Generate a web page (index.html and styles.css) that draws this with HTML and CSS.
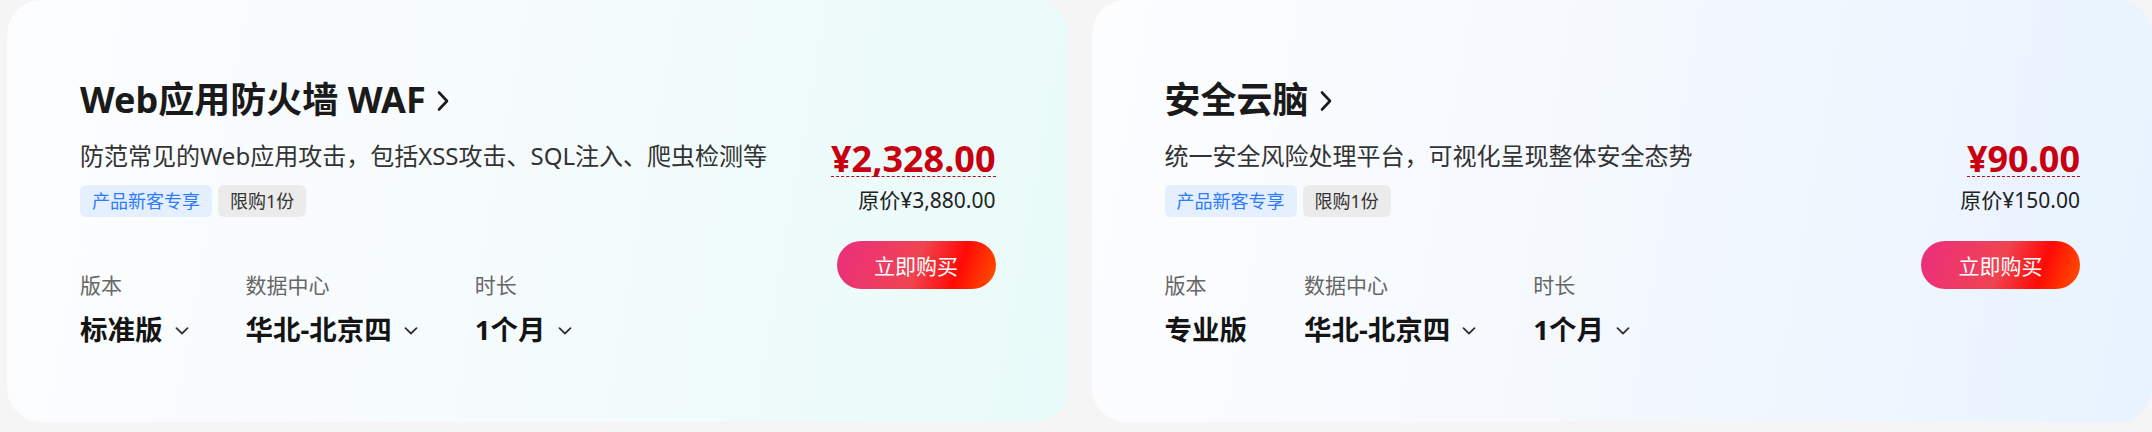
FILE: index.html
```html
<!DOCTYPE html>
<html lang="zh-CN">
<head>
<meta charset="utf-8">
<title>产品卡片</title>
<link rel="stylesheet" href="styles.css">
</head>
<body>
<div class="cards">
  <div class="card card-waf">
    <div class="main">
      <h2 class="title">Web应用防火墙 WAF<svg class="arrow" viewBox="0 0 14 22" width="14" height="22"><path d="M3 2.5 L11 11 L3 19.5" fill="none" stroke="#1a1a1a" stroke-width="2.6" stroke-linecap="round" stroke-linejoin="round"/></svg></h2>
      <p class="desc">防范常见的Web应用攻击，包括XSS攻击、SQL注入、爬虫检测等</p>
      <div class="tags"><span class="tag tag-blue">产品新客专享</span><span class="tag tag-gray">限购1份</span></div>
      <div class="opts">
        <div class="opt"><div class="opt-label">版本</div><div class="opt-value">标准版<svg class="caret" viewBox="0 0 14 8" width="14" height="8"><path d="M1.5 1.2 L7 6.5 L12.5 1.2" fill="none" stroke="#333" stroke-width="1.8" stroke-linecap="round" stroke-linejoin="round"/></svg></div></div>
        <div class="opt"><div class="opt-label">数据中心</div><div class="opt-value">华北-北京四<svg class="caret" viewBox="0 0 14 8" width="14" height="8"><path d="M1.5 1.2 L7 6.5 L12.5 1.2" fill="none" stroke="#333" stroke-width="1.8" stroke-linecap="round" stroke-linejoin="round"/></svg></div></div>
        <div class="opt"><div class="opt-label">时长</div><div class="opt-value">1个月<svg class="caret" viewBox="0 0 14 8" width="14" height="8"><path d="M1.5 1.2 L7 6.5 L12.5 1.2" fill="none" stroke="#333" stroke-width="1.8" stroke-linecap="round" stroke-linejoin="round"/></svg></div></div>
      </div>
    </div>
    <div class="side">
      <div class="price"><span class="price-num">¥2,328.00</span></div>
      <div class="orig">原价¥3,880.00</div>
      <button class="buy">立即购买</button>
    </div>
  </div>
  <div class="card card-brain">
    <div class="main">
      <h2 class="title">安全云脑<svg class="arrow" viewBox="0 0 14 22" width="14" height="22"><path d="M3 2.5 L11 11 L3 19.5" fill="none" stroke="#1a1a1a" stroke-width="2.6" stroke-linecap="round" stroke-linejoin="round"/></svg></h2>
      <p class="desc">统一安全风险处理平台，可视化呈现整体安全态势</p>
      <div class="tags"><span class="tag tag-blue">产品新客专享</span><span class="tag tag-gray">限购1份</span></div>
      <div class="opts">
        <div class="opt"><div class="opt-label">版本</div><div class="opt-value">专业版</div></div>
        <div class="opt"><div class="opt-label">数据中心</div><div class="opt-value">华北-北京四<svg class="caret" viewBox="0 0 14 8" width="14" height="8"><path d="M1.5 1.2 L7 6.5 L12.5 1.2" fill="none" stroke="#333" stroke-width="1.8" stroke-linecap="round" stroke-linejoin="round"/></svg></div></div>
        <div class="opt"><div class="opt-label">时长</div><div class="opt-value">1个月<svg class="caret" viewBox="0 0 14 8" width="14" height="8"><path d="M1.5 1.2 L7 6.5 L12.5 1.2" fill="none" stroke="#333" stroke-width="1.8" stroke-linecap="round" stroke-linejoin="round"/></svg></div></div>
      </div>
    </div>
    <div class="side">
      <div class="price"><span class="price-num">¥90.00</span></div>
      <div class="orig">原价¥150.00</div>
      <button class="buy">立即购买</button>
    </div>
  </div>
</div>
</body>
</html>
```
FILE: styles.css
```css
* { box-sizing: border-box; }
html, body {
  margin: 0;
  padding: 0;
  background: #f5f5f5;
  font-family: "Noto Sans", "Noto Sans CJK SC", sans-serif;
  color: #1a1a1a;
  overflow: hidden;
}
.cards {
  display: grid;
  grid-template-columns: 1fr 1fr;
  column-gap: 24px;
  padding-left: 7px;
  height: 432px;
}
.card {
  height: 422px;
  border-radius: 34px;
  padding: 80px 72px 0 73px;
  display: flex;
  justify-content: space-between;
}
.card-waf {
  background: linear-gradient(100deg, #fcfdfe 0%, #f6fbfd 45%, #e8fbf9 100%);
}
.card-brain {
  background: linear-gradient(100deg, #fcfdfe 0%, #f5f9fe 45%, #e8f3ff 100%);
}
.main { display: flex; flex-direction: column; align-items: flex-start; }
.title {
  margin: 0;
  font-size: 36px;
  line-height: 40px;
  font-weight: 700;
  color: #1a1a1a;
  display: flex;
  align-items: center;
}
.arrow { margin-left: 10px; margin-top: 2px; }
.desc {
  margin: 20px 0 0;
  font-size: 24px;
  line-height: 32px;
  color: #333;
}
.tags { display: flex; gap: 6px; margin-top: 13px; }
.tag {
  height: 32px;
  line-height: 32px;
  padding: 0 12px;
  border-radius: 6px;
  font-size: 18px;
}
.tag-blue { background: #e4efff; color: #2f7bff; }
.tag-gray { background: #ebebeb; color: #333; }
.opts { display: flex; gap: 57px; margin-top: 54px; }
.opt-label {
  font-size: 21px;
  line-height: 28px;
  color: #666;
}
.opt-value {
  margin-top: 13px;
  font-size: 27.5px;
  line-height: 36px;
  font-weight: 700;
  color: #141414;
  display: flex;
  align-items: center;
}
.caret { margin-left: 12px; margin-top: 2px; }
.side {
  display: flex;
  flex-direction: column;
  align-items: flex-end;
  padding-top: 62px;
}
.price { line-height: 34px; }
.price-num {
  display: inline-block;
  font-size: 36px;
  line-height: 34px;
  font-weight: 700;
  color: #c8000f;
  border-bottom: 1.5px dashed #b0101a;
}
.orig {
  margin-top: 3px;
  font-size: 21px;
  line-height: 28px;
  color: #222;
}
.buy {
  margin-top: 27px;
  width: 159px;
  height: 48px;
  border: none;
  border-radius: 24px;
  background: linear-gradient(110deg, #ec2d7e 0%, #ef4452 50%, #ff0a05 75%, #ff5500 100%);
  color: #fff;
  font-family: "Noto Sans CJK SC", sans-serif;
  font-size: 21px;
  padding: 0;
}
```
